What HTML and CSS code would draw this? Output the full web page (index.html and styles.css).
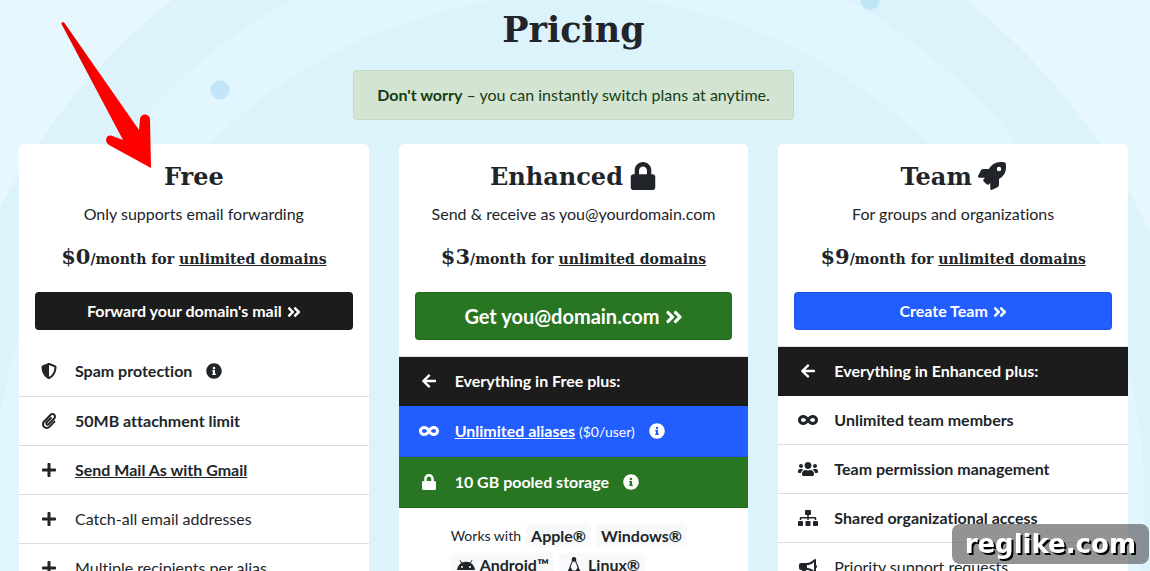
FILE: index.html
```html
<!DOCTYPE html>
<html lang="en">
<head>
    <meta charset="UTF-8">
    <meta name="viewport" content="width=device-width, initial-scale=1.0">
    <title>Pricing</title>
    <link rel="stylesheet" href="styles.css">
</head>
<body>

    <!-- Icon set -->
    <svg class="icon-set" aria-hidden="true">
        <symbol id="chevrons" viewBox="0 0 448 512"><path d="M224.3 273l-136 136c-9.4 9.4-24.6 9.4-33.9 0l-22.6-22.6c-9.4-9.4-9.4-24.6 0-33.9l96.4-96.4-96.4-96.4c-9.4-9.4-9.4-24.6 0-33.9L54.3 103c9.4-9.4 24.6-9.4 33.9 0l136 136c9.5 9.4 9.5 24.6.1 34zm192-34l-136-136c-9.4-9.4-24.6-9.4-33.9 0l-22.6 22.6c-9.4 9.4-9.4 24.6 0 33.9l96.4 96.4-96.4 96.4c-9.4 9.4-9.4 24.6 0 33.9l22.6 22.6c9.4 9.4 24.6 9.4 33.9 0l136-136c9.4-9.2 9.4-24.4 0-33.8z"/></symbol>
        <symbol id="lock" viewBox="0 0 448 512"><path d="M400 224h-24v-72C376 68.2 307.8 0 224 0S72 68.2 72 152v72H48c-26.5 0-48 21.5-48 48v192c0 26.5 21.5 48 48 48h352c26.5 0 48-21.5 48-48V272c0-26.5-21.5-48-48-48zm-104 0H152v-72c0-39.7 32.3-72 72-72s72 32.3 72 72v72z"/></symbol>
        <symbol id="rocket" viewBox="0 0 512 512"><path d="M505.1 19.1c-1.2-5.5-6.7-11-12.2-12.2C460.7 0 435.5 0 410.4 0 307.2 0 245.3 55.2 199.1 128H94.8c-16.3 0-35.6 11.9-42.9 26.5L2.5 253.3A28.4 28.4 0 0 0 0 264a24 24 0 0 0 24 24h103.8l-22.5 22.5c-11.4 11.4-13 32.3 0 45.3l50.9 50.8c11.2 11.2 32.2 13.2 45.3 0l22.5-22.5V488a24 24 0 0 0 24 24 28.6 28.6 0 0 0 10.7-2.5l98.7-49.4c14.6-7.3 26.5-26.5 26.5-42.9V312.8c72.6-46.3 128-108.4 128-211.1.1-25.2.1-50.4-6.8-82.6zM384 168a40 40 0 1 1 40-40 40 40 0 0 1-40 40z"/></symbol>
        <symbol id="shield" viewBox="0 0 512 512"><path d="M466.5 83.7l-192-80a48.15 48.15 0 0 0-36.9 0l-192 80C27.7 91.1 16 108.6 16 128c0 198.5 114.5 335.7 221.5 380.3 11.8 4.9 25.1 4.9 36.9 0C360.1 472.6 496 349.3 496 128c0-19.4-11.7-36.9-29.5-44.3zM256.1 446.3l-.1-381 175.9 73.3c-3.3 151.4-82.1 261.1-175.8 307.7z"/></symbol>
        <symbol id="paperclip" viewBox="0 0 448 512"><path d="M43.246 466.142c-58.43-60.289-57.341-157.511 1.386-217.581L254.392 34c44.316-45.332 116.351-45.336 160.671 0 43.89 44.894 43.943 117.329 0 162.276L232.214 383.128c-29.855 30.537-78.633 30.111-107.982-.998-28.275-29.97-27.368-77.473 1.452-106.953l143.743-146.835c6.182-6.314 16.312-6.422 22.626-.241l22.861 22.379c6.315 6.182 6.422 16.312.241 22.626L171.427 319.927c-4.932 5.045-5.236 13.428-.648 18.292 4.372 4.634 11.245 4.711 15.688.165l182.849-186.851c19.613-20.062 19.613-52.725-.011-72.798-19.189-19.627-49.957-19.637-69.154 0L90.39 293.295c-34.763 35.56-35.299 93.12-1.191 128.313 34.01 35.093 88.985 35.137 123.058.286l172.06-175.999c6.177-6.319 16.307-6.433 22.626-.256l22.877 22.364c6.319 6.177 6.434 16.307.256 22.626l-172.06 175.998c-59.576 60.938-155.943 60.216-214.77-.485z"/></symbol>
        <symbol id="plus" viewBox="0 0 448 512"><path d="M416 208H272V64c0-17.67-14.33-32-32-32h-32c-17.67 0-32 14.33-32 32v144H32c-17.67 0-32 14.33-32 32v32c0 17.67 14.33 32 32 32h144v144c0 17.67 14.33 32 32 32h32c17.67 0 32-14.33 32-32V304h144c17.67 0 32-14.33 32-32v-32c0-17.67-14.33-32-32-32z"/></symbol>
        <symbol id="arrow-left" viewBox="0 0 448 512"><path d="M257.5 445.1l-22.2 22.2c-9.4 9.4-24.6 9.4-33.9 0L7 273c-9.4-9.4-9.4-24.6 0-33.9L201.4 44.7c9.4-9.4 24.6-9.4 33.9 0l22.2 22.2c9.5 9.5 9.3 25-.4 34.3L136.6 216H424c13.3 0 24 10.7 24 24v32c0 13.3-10.7 24-24 24H136.6l120.5 114.8c9.8 9.3 10 24.8.4 34.3z"/></symbol>
        <symbol id="info" viewBox="0 0 512 512"><path d="M256 8C119.043 8 8 119.083 8 256c0 136.997 111.043 248 248 248s248-111.003 248-248C504 119.083 392.957 8 256 8zm0 110c23.196 0 42 18.804 42 42s-18.804 42-42 42-42-18.804-42-42 18.804-42 42-42zm56 254c0 6.627-5.373 12-12 12h-88c-6.627 0-12-5.373-12-12v-24c0-6.627 5.373-12 12-12h12v-64h-12c-6.627 0-12-5.373-12-12v-24c0-6.627 5.373-12 12-12h64c6.627 0 12 5.373 12 12v100h12c6.627 0 12 5.373 12 12v24z"/></symbol>
        <symbol id="infinity" viewBox="0 0 640 512"><path d="M471.1 96C405 96 353.3 137.3 320 174.6 286.7 137.3 235 96 168.9 96 75.8 96 0 167.8 0 256s75.8 160 168.9 160c66.1 0 117.8-41.3 151.1-78.6 33.3 37.3 85 78.6 151.1 78.6 93.1 0 168.9-71.8 168.9-160S564.2 96 471.1 96zM168.9 320c-40.2 0-72.9-28.7-72.9-64s32.7-64 72.9-64c38.2 0 73.4 36.1 94 64-20.4 27.6-55.9 64-94 64zm302.2 0c-38.2 0-73.4-36.1-94-64 20.4-27.6 55.9-64 94-64 40.2 0 72.9 28.7 72.9 64s-32.7 64-72.9 64z"/></symbol>
        <symbol id="users" viewBox="0 0 640 512"><path d="M96 224c35.3 0 64-28.7 64-64s-28.7-64-64-64-64 28.7-64 64 28.7 64 64 64zm448 0c35.3 0 64-28.7 64-64s-28.7-64-64-64-64 28.7-64 64 28.7 64 64 64zm32 32h-64c-17.6 0-33.5 7.1-45.1 18.6 40.3 22.1 68.9 62 75.1 109.4h66c17.7 0 32-14.3 32-32v-32c0-35.3-28.7-64-64-64zm-256 0c61.9 0 112-50.1 112-112S381.9 32 320 32 208 82.1 208 144s50.1 112 112 112zm76.8 32h-8.3c-20.8 10-43.9 16-68.5 16s-47.6-6-68.5-16h-8.3C179.6 288 128 339.6 128 403.2V432c0 26.5 21.5 48 48 48h288c26.5 0 48-21.5 48-48v-28.8c0-63.6-51.6-115.2-115.2-115.2zm-223.7-13.4C161.5 263.1 145.6 256 128 256H64c-35.3 0-64 28.7-64 64v32c0 17.7 14.3 32 32 32h65.9c6.3-47.4 34.9-87.3 75.2-109.4z"/></symbol>
        <symbol id="sitemap" viewBox="0 0 640 512"><path d="M128 352H32c-17.67 0-32 14.33-32 32v96c0 17.67 14.33 32 32 32h96c17.67 0 32-14.33 32-32v-96c0-17.67-14.33-32-32-32zm-24-80h192v48h48v-48h192v48h48v-57.59c0-21.17-17.23-38.41-38.41-38.41H344v-64h40c17.67 0 32-14.33 32-32V32c0-17.67-14.33-32-32-32H256c-17.67 0-32 14.33-32 32v96c0 17.67 14.33 32 32 32h40v64H94.41C73.23 224 56 241.23 56 262.41V320h48v-48zm264 80h-96c-17.67 0-32 14.33-32 32v96c0 17.67 14.33 32 32 32h96c17.67 0 32-14.33 32-32v-96c0-17.67-14.33-32-32-32zm240 0h-96c-17.67 0-32 14.33-32 32v96c0 17.67 14.33 32 32 32h96c17.67 0 32-14.33 32-32v-96c0-17.67-14.33-32-32-32z"/></symbol>
        <symbol id="bullhorn" viewBox="0 0 576 512"><path d="M576 240c0-23.63-12.95-44.04-32-55.12V32.01C544 23.26 537.02 0 512 0c-7.12 0-14.19 2.38-19.98 7.02l-85.03 68.03C364.28 109.19 310.66 128 256 128H64c-35.35 0-64 28.65-64 64v96c0 35.35 28.65 64 64 64h33.7c-1.39 10.48-2.18 21.14-2.18 32 0 39.77 9.26 77.35 25.56 110.94 5.19 10.69 16.52 17.06 28.4 17.06h74.28c26.05 0 41.69-29.84 25.9-50.56-16.4-21.52-26.15-48.36-26.15-77.44 0-11.11 1.62-21.79 4.41-32H256c54.66 0 108.28 18.81 150.98 52.95l85.03 68.03a32.023 32.023 0 0 0 19.98 7.02c24.92 0 32-22.78 32-32V295.13C563.05 284.04 576 263.63 576 240zm-96 141.42l-33.05-26.44C392.95 311.78 325.12 288 256 288v-96c69.12 0 136.95-23.78 190.95-66.98L480 98.58v282.84z"/></symbol>
        <symbol id="android" viewBox="0 0 18 16"><path d="M0 13C.4 9.6 2.1 7.3 4.2 6L2.500 3.300l.7-.4L5 5.600c2.500-1.100 5.500-1.100 8 0l1.800-2.700.7.4L13.800 6c2.100 1.300 3.800 3.600 4.200 7zM5 9a1 1 0 1 0 0 2 1 1 0 0 0 0-2zm8 0a1 1 0 1 0 0 2 1 1 0 0 0 0-2z"/></symbol>
        <symbol id="linux" viewBox="0 0 14 16"><path d="M7 0C4.9 0 4.6 1.6 4.8 4 4.7 6 2.4 8 2.3 11L1 13.5c0 1 2.6 2 3.6 2.2.8.1 1.2-.7 1.2-.7h2.5s.5.8 1.3.7c1-.2 3.500-1.200 3.500-2.200L11.800 11C11.700 8 9.300 6 9.200 4 9.400 1.600 9.100 0 7 0zM6 4.300l1 .7 1.100-.7c.3 2 2.300 4 2.300 6.700l-1.800 2.500H5.500L3.700 10.500C3.700 8 5.700 6 6 4.300z"/></symbol>
    </svg>

    <main class="page">
        <h1>Pricing</h1>
        <p class="notice"><strong>Don't worry</strong> – you can instantly switch plans at anytime.</p>

        <div class="plans">
            <!-- Free plan -->
            <section class="card">
                <div class="card-top">
                    <h2>Free</h2>
                    <p>Only supports email forwarding</p>
                    <h3><span class="price">$0</span>/month for <a href="#">unlimited domains</a></h3>
                    <button class="btn btn-dark">Forward your domain's mail <svg class="chevrons"><use href="#chevrons"/></svg></button>
                </div>
                <ul class="features">
                    <li class="bold first"><svg class="icon"><use href="#shield"/></svg><span>Spam protection</span><svg class="info"><use href="#info"/></svg></li>
                    <li class="bold"><svg class="icon"><use href="#paperclip"/></svg><span>50MB attachment limit</span></li>
                    <li class="bold"><svg class="icon"><use href="#plus"/></svg><a href="#">Send Mail As with Gmail</a></li>
                    <li><svg class="icon"><use href="#plus"/></svg><span>Catch-all email addresses</span></li>
                    <li><svg class="icon"><use href="#plus"/></svg><span>Multiple recipients per alias</span></li>
                </ul>
            </section>

            <!-- Enhanced plan -->
            <section class="card">
                <div class="card-top">
                    <h2>Enhanced <svg class="title-icon"><use href="#lock"/></svg></h2>
                    <p>Send &amp; receive as you@yourdomain.com</p>
                    <h3><span class="price">$3</span>/month for <a href="#">unlimited domains</a></h3>
                    <button class="btn btn-lg btn-green">Get you@domain.com <svg class="chevrons"><use href="#chevrons"/></svg></button>
                </div>
                <ul class="features lined">
                    <li class="bold dark"><svg class="icon"><use href="#arrow-left"/></svg><span>Everything in Free plus:</span></li>
                    <li class="bold blue"><svg class="icon"><use href="#infinity"/></svg><span><a href="#">Unlimited aliases</a> <small>($0/user)</small></span><svg class="info"><use href="#info"/></svg></li>
                    <li class="bold green"><svg class="icon"><use href="#lock"/></svg><span>10 GB pooled storage</span><svg class="info"><use href="#info"/></svg></li>
                </ul>
                <div class="works">
                    <small>Works with</small>
                    <span class="badge">Apple®</span>
                    <span class="badge">Windows®</span>
                    <span class="badge"><svg class="icon"><use href="#android"/></svg>Android™</span>
                    <span class="badge"><svg class="icon"><use href="#linux"/></svg>Linux®</span>
                </div>
            </section>

            <!-- Team plan -->
            <section class="card">
                <div class="card-top">
                    <h2>Team <svg class="title-icon"><use href="#rocket"/></svg></h2>
                    <p>For groups and organizations</p>
                    <h3><span class="price">$9</span>/month for <a href="#">unlimited domains</a></h3>
                    <button class="btn btn-blue">Create Team <svg class="chevrons"><use href="#chevrons"/></svg></button>
                </div>
                <ul class="features lined">
                    <li class="bold dark"><svg class="icon"><use href="#arrow-left"/></svg><span>Everything in Enhanced plus:</span></li>
                    <li class="bold"><svg class="icon"><use href="#infinity"/></svg><span>Unlimited team members</span></li>
                    <li class="bold"><svg class="icon"><use href="#users"/></svg><span>Team permission management</span></li>
                    <li class="bold"><svg class="icon"><use href="#sitemap"/></svg><span>Shared organizational access</span></li>
                    <li><svg class="icon"><use href="#bullhorn"/></svg><span>Priority support requests</span></li>
                </ul>
            </section>
        </div>

        <!-- Red arrow over the Free card -->
        <svg class="pointer" viewBox="0 0 90 147" aria-hidden="true">
            <defs>
                <linearGradient id="red" x1="0" y1="1" x2="1" y2="0.6">
                    <stop offset="0.45" stop-color="#e40000"/>
                    <stop offset="0.55" stop-color="#ff0000"/>
                </linearGradient>
            </defs>
            <path fill="url(#red)" d="M0.5 2C0 0 2.5-0.5 3.5 1L78 108 79 97C79.5 91 88.5 91 89 97L90 146 48 123C43 119 45 113 50 113.5L62 118Z"/>
        </svg>
    </main>

    <div class="watermark">reglike.com</div>

</body>
</html>
```
FILE: styles.css
```css
* {
    margin: 0;
    padding: 0;
    box-sizing: border-box;
}

body {
    font-family: Lato, sans-serif;
    font-size: 16px;
    line-height: 24px;
    font-variant-ligatures: none;
    color: #212529;
}

a {
    color: inherit;
    text-decoration: underline;
}

svg {
    fill: currentColor;
    flex-shrink: 0;
}

.icon-set {
    display: none;
}

/* Page with the rings and dots behind it */
.page {
    position: relative;
    height: 100vh;
    overflow: hidden;
    padding: 6px 22px 0 19px;
    background:
        radial-gradient(circle at 220px 90px, #c2e5f9 9px, transparent 10px),
        radial-gradient(circle at 870px 0, #bee4f8 9px, transparent 10px),
        radial-gradient(circle at calc(50% - 6px) 504px, #dcf3fc 508px, #e1f6fe 509px, #e1f6fe 575px, #dcf3fc 576px, #dcf3fc 641px, #e6f8fe 642px);
}

h1, h2, h3 {
    font-family: "DejaVu Serif", serif;
    font-weight: bold;
    text-align: center;
}

h1 {
    font-size: 35px;
    line-height: 48px;
    margin-bottom: 16px;
}

.notice {
    width: fit-content;
    margin: 0 auto 24px;
    padding: 12px 23px;
    color: #153d13;
    background-color: #d3e4d2;
    border: 1px solid #c2d8bf;
    border-radius: 4px;
}

/* Plan cards */
.plans {
    display: grid;
    grid-template-columns: repeat(3, 1fr);
    gap: 30px;
}

.card {
    background-color: #fff;
    border-radius: 5px;
    overflow: hidden;
}

.card-top {
    padding: 16px;
    text-align: center;
}

.card-top p {
    margin: 8px 0 16px;
}

h2 {
    display: flex;
    justify-content: center;
    align-items: center;
    gap: 6px;
    font-size: 24px;
    line-height: 34px;
}

.title-icon {
    width: 28px;
    height: 28px;
    margin-bottom: 2px;
}

h3 {
    font-size: 14px;
    line-height: 34px;
    margin-bottom: 16px;
}

.price {
    font-size: 21px;
    line-height: 24px;
}

/* Buttons */
.btn {
    display: flex;
    justify-content: center;
    align-items: center;
    gap: 5px;
    width: 100%;
    height: 38px;
    font: inherit;
    font-weight: 700;
    color: #fff;
    border: 1px solid rgba(0, 0, 0, 0.1);
    border-radius: 4px;
    cursor: pointer;
}

.btn-lg {
    height: 48px;
    font-size: 20px;
}

.btn-dark {
    background-color: #1c1c1c;
}

.btn-green {
    background-color: #287522;
}

.btn-blue {
    background-color: #225dff;
}

.chevrons {
    width: 14px;
    height: 16px;
    margin-top: 2px;
}

.btn-lg .chevrons {
    width: 18px;
    height: 20px;
}

/* Feature rows */
.features {
    list-style: none;
}

.features li {
    display: flex;
    align-items: center;
    gap: 16px;
    padding: 12px 20px;
    border-bottom: 1px solid #dcdddd;
}

.features .first {
    padding-bottom: 13px;
    margin-top: 1px;
}

.lined {
    border-top: 1px solid #dee2e6;
}

.bold {
    font-weight: 700;
}

.features .dark,
.features .blue,
.features .green {
    color: #fff;
    border-bottom-color: rgba(0, 0, 0, 0.125);
}

.dark {
    background-color: #1c1c1c;
}

.blue {
    background-color: #225dff;
}

.green {
    background-color: #287522;
}

.features .blue,
.features .green {
    padding: 13px 20px;
}

.icon {
    width: 20px;
    height: 16px;
}

.info {
    width: 16px;
    height: 16px;
    margin-left: -2px;
}

small {
    font-size: 14px;
    font-weight: 400;
    line-height: 16px;
}

.works {
    display: flex;
    flex-wrap: wrap;
    align-items: center;
    gap: 6px 5px;
    padding: 16px 40px 16px 52px;
}

.badge {
    display: flex;
    align-items: center;
    gap: 4px;
    padding: 0 5px;
    font-weight: 700;
    line-height: 23px;
    background-color: #f8f9fa;
    border-radius: 4px;
}

/* Overlays */
.pointer {
    position: absolute;
    top: 22px;
    left: 61px;
    width: 90px;
    height: 147px;
}

.watermark {
    position: fixed;
    right: 1px;
    bottom: 7px;
    padding: 0 13px;
    font-family: "DejaVu Sans", sans-serif;
    font-size: 26px;
    font-weight: bold;
    line-height: 40px;
    color: #fff;
    text-shadow: 2px 2px 0 #000;
    background-color: rgba(80, 80, 80, 0.62);
    border-radius: 8px;
}
```
